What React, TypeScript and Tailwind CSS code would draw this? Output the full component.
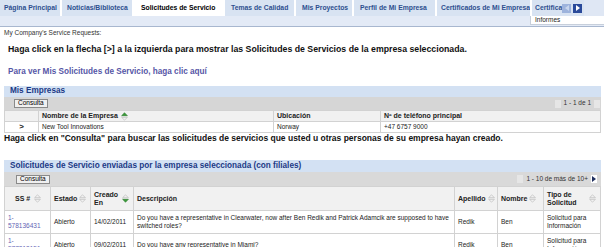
import React from "react";

const tabs = [
  { label: "Página Principal", w: "w-[62px]", pl: "pl-[4px]" },
  { label: "Noticias/Biblioteca", w: "w-[72px]", pl: "pl-[5px]" },
  { label: "Solicitudes de Servicio", w: "w-[91px]", pl: "pl-[7px]", active: true },
  { label: "Temas de Calidad", w: "w-[71px]", pl: "pl-[6px]" },
  { label: "Mis Proyectos", w: "w-[58px]", pl: "pl-[6px]" },
  { label: "Perfil de Mi Empresa", w: "w-[83px]", pl: "pl-[6px]" },
  { label: "Certificados de Mi Empresa", w: "w-[95px]", pl: "pl-[4px]" },
  { label: "Certificados", w: "w-[40px]", pl: "pl-[3px]" },
];

const SortIcon = ({ dir }: { dir?: "up" | "down" }) => (
  <svg width="9" height="9" viewBox="0 0 9 11" className="shrink-0">
    <path
      d="M1 4.5 L4.5 1 L8 4.5 Z"
      fill={dir === "up" ? "#3a9a3a" : "none"}
      stroke={dir === "up" ? "#2f7f2f" : "#b9b9b9"}
      strokeWidth="0.8"
    />
    <path
      d="M1 6.5 L4.5 10 L8 6.5 Z"
      fill={dir === "down" ? "#3a9a3a" : "none"}
      stroke={dir === "down" ? "#2f7f2f" : "#b9b9b9"}
      strokeWidth="0.8"
    />
  </svg>
);

const PagerBox = ({ on, left }: { on?: boolean; left?: boolean }) => (
  <span
    className={`inline-flex items-center justify-center w-[6px] h-[8px] ${
      on ? "bg-white" : "bg-[#e6e6e6]"
    }`}
  >
    {on && (
      <svg width="4" height="6" viewBox="0 0 4 6">
        <path d={left ? "M4 0 L0 3 L4 6 Z" : "M0 0 L4 3 L0 6 Z"} fill="#1f2f5f" />
      </svg>
    )}
  </span>
);

const ConsultaBtn = () => (
  <span className="inline-flex items-center h-[9px] px-[3px] bg-[#f0f0f0] border border-[#8a8a8a] text-[6.5px] leading-none text-black">
    Consulta
  </span>
);

const PanelHeader = ({ title, h }: { title: string; h: string }) => (
  <div className={`${h} bg-[#d3e1f3] pl-[6px] flex items-center text-[8.2px] font-bold text-[#1c3a86] leading-none`}>
    {title}
  </div>
);

const th = "border border-[#d2d2d2] bg-[#f1f1f1] text-left font-bold text-[7px] leading-[8px] px-[3px] py-0 text-[#222]";
const cell = "border border-[#d2d2d2] bg-white text-[6.5px] leading-[8px] px-[3px] py-0 text-[#222]";
const td = `${cell} text-left`;

export default function App() {
  return (
    <div
      className="w-[604px] h-[247px] overflow-hidden bg-white"
      style={{ fontFamily: '"Liberation Sans", Arial, sans-serif' }}
    >
      {/* tab bar */}
      <div className="flex h-[16px]">
        <div className="flex w-[562px] overflow-hidden bg-[#d8e3f2]">
          {tabs.map((t) => (
            <div
              key={t.label}
              className={`${t.w} ${t.pl} shrink-0 h-full flex items-center border-r-2 border-white text-[6.8px] font-bold whitespace-nowrap overflow-hidden ${
                t.active ? "bg-white text-black" : "text-[#2e4f8f]"
              }`}
            >
              {t.label}
            </div>
          ))}
        </div>
        <div className="flex items-center gap-[2px] bg-[#d8e3f2] pr-[2px]">
          <span className="w-[9px] h-[9px] bg-[#9db3dc] flex items-center justify-center">
            <svg width="4" height="6" viewBox="0 0 4 6"><path d="M4 0 L0 3 L4 6 Z" fill="#c8d6ee" /></svg>
          </span>
          <span className="w-[9px] h-[9px] bg-[#2a4a9a] flex items-center justify-center">
            <svg width="4" height="6" viewBox="0 0 4 6"><path d="M0 0 L4 3 L0 6 Z" fill="#ffffff" /></svg>
          </span>
        </div>
        <div className="flex-1 bg-[#dfe7f4]" />
      </div>
      {/* sub bar */}
      <div className="h-[11px] bg-[#e3eaf6] border-b border-[#a8b7cf] flex justify-end">
        <div className="w-[74px] h-[9px] bg-white border-l border-b border-[#c7cfdb] pl-[4px] flex items-center text-[6.5px] leading-none text-[#222]">
          Informes
        </div>
      </div>

      <div className="pl-[4px] pt-[2px] text-[6.5px] leading-[8px] text-[#333]">My Company's Service Requests:</div>
      <div className="pl-[8px] pt-[8px] text-[8.75px] font-bold leading-[9px] text-[#111]">
        Haga click en la flecha [&gt;] a la izquierda para mostrar las Solicitudes de Servicios de la empresa seleccionada.
      </div>
      <div className="pl-[8px] pt-[13px] text-[8.2px] font-bold leading-[9px] text-[#5656a6]">
        Para ver Mis Solicitudes de Servicio, haga clic aquí
      </div>

      {/* Mis Empresas */}
      <div className="ml-[4px] mr-[3px] mt-[10px]">
        <PanelHeader title="Mis Empresas" h="h-[11px]" />
        <div className="h-[13px] bg-[#d6d6d6] flex items-center justify-between pl-[10px] pr-[1px]">
          <ConsultaBtn />
          <div className="flex items-center gap-[3px] text-[6.5px] leading-none text-[#333]">
            <PagerBox />
            <span>1 - 1 de 1</span>
            <PagerBox />
          </div>
        </div>
        <table className="w-full border-collapse table-fixed">
          <colgroup>
            <col className="w-[34px]" />
            <col className="w-[235px]" />
            <col className="w-[107px]" />
            <col />
          </colgroup>
          <tbody>
            <tr className="h-[11px]">
              <th className={th}></th>
              <th className={th}>
                <span className="inline-flex items-center gap-[2px] align-top">
                  Nombre de la Empresa <SortIcon dir="up" />
                </span>
              </th>
              <th className={th}>Ubicación</th>
              <th className={th}>Nº de teléfono principal</th>
            </tr>
            <tr className="h-[11px]">
              <td className={`${cell} text-center font-bold text-[8px] text-[#1c3a86]`}>&gt;</td>
              <td className={td}>New Tool Innovations</td>
              <td className={td}>Norway</td>
              <td className={td}>+47 6757 9000</td>
            </tr>
          </tbody>
        </table>
      </div>

      <div className="pl-[4px] pt-[1px] text-[8.5px] font-bold leading-[9px] text-[#111]">
        Haga click en "Consulta" para buscar las solicitudes de servicios que usted u otras personas de su empresa hayan creado.
      </div>

      {/* Solicitudes */}
      <div className="ml-[4px] mr-[3px] mt-[17px]">
        <PanelHeader title="Solicitudes de Servicio enviadas por la empresa seleccionada (con filiales)" h="h-[12px]" />
        <div className="h-[14px] bg-[#d9d9d9] flex items-center justify-between pl-[12px] pr-[4px]">
          <ConsultaBtn />
          <div className="flex items-center gap-[3px] text-[6.5px] leading-none text-[#333]">
            <PagerBox />
            <span>1 - 10 de más de 10+</span>
            <PagerBox on />
          </div>
        </div>
        <table className="w-full border-collapse table-fixed">
          <colgroup>
            <col className="w-[46px]" />
            <col className="w-[40px]" />
            <col className="w-[43px]" />
            <col className="w-[321px]" />
            <col className="w-[43px]" />
            <col className="w-[46px]" />
            <col />
          </colgroup>
          <tbody>
            <tr className="h-[24px]">
              <th className={th}>
                <span className="inline-flex items-center gap-[3px] pl-[7px]">SS # <SortIcon /></span>
              </th>
              <th className={th}>
                <span className="inline-flex items-center gap-[1px]">Estado <SortIcon /></span>
              </th>
              <th className={th}>
                <span className="flex items-center justify-between">
                  <span>Creado<br />En</span>
                  <SortIcon dir="down" />
                </span>
              </th>
              <th className={th}>Descripción</th>
              <th className={th}>
                <span className="inline-flex items-center gap-[1px]">Apellido <SortIcon /></span>
              </th>
              <th className={th}>
                <span className="inline-flex items-center gap-[1px]">Nombre <SortIcon /></span>
              </th>
              <th className={th}>
                <span className="flex items-center justify-between">
                  <span>Tipo de<br />Solicitud</span>
                  <SortIcon />
                </span>
              </th>
            </tr>
            {[
              ["578136431", "14/02/2011", "Do you have a representative in Clearwater, now after Ben Redik and Patrick Adamcik are supposed to have switched roles?"],
              ["577218151", "09/02/2011", "Do you have any representative in Miami?"],
            ].map(([id, date, desc]) => (
              <tr key={id} className="h-[23px]">
                <td className={`${td} text-[#6464b4]`}>
                  1-
                  <br />
                  {id}
                </td>
                <td className={td}>Abierto</td>
                <td className={td}>{date}</td>
                <td className={td}>{desc}</td>
                <td className={td}>Redik</td>
                <td className={td}>Ben</td>
                <td className={td}>
                  Solicitud para
                  <br />
                  Información
                </td>
              </tr>
            ))}
          </tbody>
        </table>
      </div>
    </div>
  );
}
